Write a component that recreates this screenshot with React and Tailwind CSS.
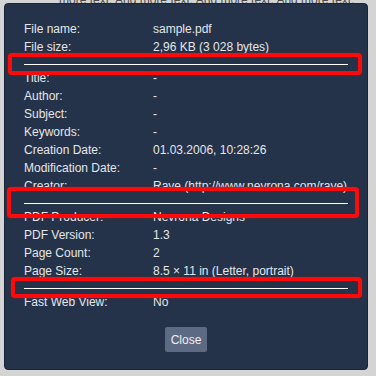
import React from "react";

const groups = [
  [
    ["File name:", "sample.pdf"],
    ["File size:", "2,96 KB (3 028 bytes)"],
  ],
  [
    ["Title:", "-"],
    ["Author:", "-"],
    ["Subject:", "-"],
    ["Keywords:", "-"],
    ["Creation Date:", "01.03.2006, 10:28:26"],
    ["Modification Date:", "-"],
    ["Creator:", "Rave (http://www.nevrona.com/rave)"],
  ],
  [
    ["PDF Producer:", "Nevrona Designs"],
    ["PDF Version:", "1.3"],
    ["Page Count:", "2"],
    ["Page Size:", "8.5 × 11 in (Letter, portrait)"],
  ],
  [["Fast Web View:", "No"]],
];

// red annotation boxes drawn over the separators
const marks = [
  "left-[8px] top-[53px] w-[354px] h-[22px]",
  "left-[7px] top-[187px] w-[352px] h-[31px]",
  "left-[11px] top-[277px] w-[351px] h-[21px]",
];

export default function App() {
  return (
    <div className="relative w-[376px] h-[376px] overflow-hidden bg-[#d4d4d4] font-['Liberation_Sans',Arial,sans-serif] text-[12px]">
      <p className="absolute left-[59px] top-[-9px] text-[#4a4a4a] whitespace-nowrap">
        more text. And more text. And more text. And more text.
      </p>

      <div className="absolute left-[4px] top-[3px] w-[364px] h-[367px] rounded-[4px] border border-[#1a2638] bg-[#243349] text-[#e4e6ea] px-[19px] pt-[16px]">
        {groups.map((rows, gi) => (
          <div key={gi}>
            {gi > 0 && <div className="mt-[8px] mb-[4px] h-px bg-white" />}
            {rows.map(([k, v]) => (
              <div key={k} className="flex h-[18px] items-center leading-[18px]">
                <span className="w-[129px] shrink-0">{k}</span>
                <span className="whitespace-nowrap">{v}</span>
              </div>
            ))}
          </div>
        ))}
        <div className="flex justify-center mt-[16px]">
          <button className="h-[25px] px-[6px] rounded-[2px] bg-[#5d6a84] text-[#eef0f3] text-[12px]">
            Close
          </button>
        </div>
      </div>

      {marks.map((m) => (
        <div
          key={m}
          className={`absolute ${m} rounded-[4px] border-[4px] border-[#ff0a0a] shadow-[0_0_1px_#ff0000]`}
        />
      ))}
    </div>
  );
}
